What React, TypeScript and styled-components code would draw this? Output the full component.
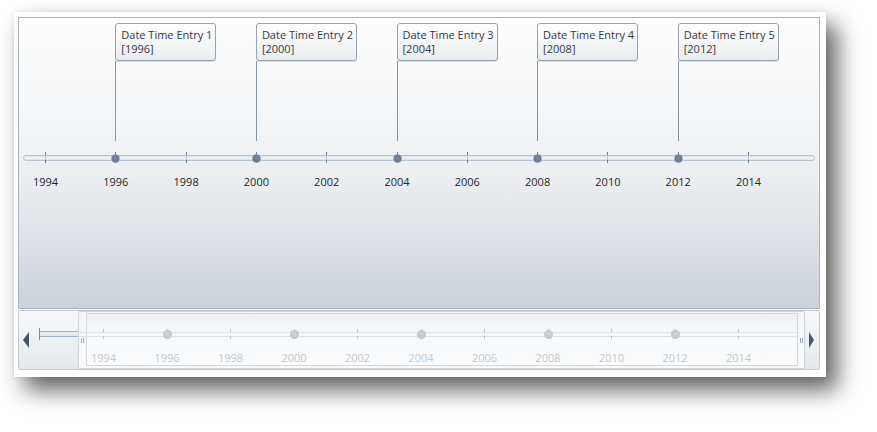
import React from "react";
import styled, { createGlobalStyle } from "styled-components";

const GlobalStyle = createGlobalStyle`
  html, body { margin: 0; padding: 0; background: #ffffff; }
  body { font-family: "Open Sans", "Liberation Sans", sans-serif; }
`;

const YEARS = [1994, 1996, 1998, 2000, 2002, 2004, 2006, 2008, 2010, 2012, 2014];
const ENTRIES = [
  { n: 1, year: 1996 },
  { n: 2, year: 2000 },
  { n: 3, year: 2004 },
  { n: 4, year: 2008 },
  { n: 5, year: 2012 },
];

const mainX = (y: number) => 26 + (y - 1994) * 35.15;
const navX = (y: number) => 16 + (y - 1994) * 31.75;

const Page = styled.div`
  padding: 12px 0 0 14px;
  height: 432px;
  box-sizing: border-box;
`;

const Frame = styled.div`
  width: 812px;
  height: 365px;
  box-sizing: border-box;
  padding: 5px 6px 7px 4px;
  background: #ffffff;
  box-shadow: 11px 13px 22px rgba(0, 0, 0, 0.62), 0 0 6px rgba(0, 0, 0, 0.08);
  display: flex;
  flex-direction: column;
  gap: 1px;
`;

const MainPanel = styled.div`
  height: 292px;
  flex-shrink: 0;
  box-sizing: border-box;
  border: 1px solid #a9b3bd;
  padding-top: 5px;
  background: linear-gradient(180deg, #fdfdfd 0%, #f6f7f8 30%, #eceef1 55%, #dde1e6 78%, #ccd2d9 100%);
  display: flex;
  flex-direction: column;
`;

const CalloutRow = styled.div`
  position: relative;
  height: 118px;
`;

const Callout = styled.div`
  position: absolute;
  top: 0;
  display: flex;
  flex-direction: column;
`;

const CalloutBox = styled.div`
  width: 101px;
  box-sizing: border-box;
  border: 1px solid #97a3b0;
  border-radius: 3px;
  padding: 4px 5px;
  background: linear-gradient(180deg, #ffffff 0%, #f3f4f6 60%, #e9ecef 100%);
  box-shadow: 0 1px 1px rgba(0, 0, 0, 0.12);
  font-size: 11px;
  line-height: 14px;
  color: #333a42;
  white-space: nowrap;
`;

const Stem = styled.div`
  width: 1px;
  height: 80px;
  background: #8794a2;
`;

const AxisRow = styled.div`
  position: relative;
  height: 12px;
  margin-top: 11px;
`;

const Track = styled.div`
  position: absolute;
  left: 4px;
  right: 4px;
  top: 3px;
  height: 6px;
  box-sizing: border-box;
  border: 1px solid #b7c3cf;
  border-radius: 3px;
  background: linear-gradient(180deg, #d9e1ea 0%, #f1f4f7 50%, #d9e1ea 100%);
`;

const Tick = styled.div`
  position: absolute;
  top: 0;
  width: 1px;
  height: 11px;
  background: linear-gradient(180deg, #6f7d8c 0 3px, #b7c1cc 3px 8px, #6f7d8c 8px);
`;

const Dot = styled.div`
  position: absolute;
  top: 1.5px;
  width: 9px;
  height: 9px;
  margin-left: -4.5px;
  border-radius: 50%;
  box-sizing: border-box;
  border: 1px solid #8c9bab;
  background: radial-gradient(circle at 50% 45%, #7d8fa2 0%, #5f7184 70%);
`;

const LabelRow = styled.div`
  position: relative;
  height: 16px;
  margin-top: 10px;
`;

const YearLabel = styled.span<{ $faint?: boolean }>`
  position: absolute;
  top: 0;
  transform: translateX(-50%);
  font-size: 11px;
  line-height: ${(p) => (p.$faint ? "14px" : "16px")};
  color: ${(p) => (p.$faint ? "#c2c7cd" : "#22272c")};
`;

const NavPanel = styled.div`
  height: 60px;
  flex-shrink: 0;
  display: flex;
  box-sizing: border-box;
  border: 1px solid #c3cad2;
  border-radius: 2px;
  background: linear-gradient(180deg, #f6f7f9 0%, #eef1f4 50%, #e4e8ec 100%);
`;

const LeftZone = styled.div`
  width: 59px;
  display: flex;
  align-items: center;
`;

const ArrowButton = styled.div<{ $dir: "left" | "right" }>`
  width: 0;
  height: 0;
  border-top: 8px solid transparent;
  border-bottom: 8px solid transparent;
  ${(p) =>
    p.$dir === "left"
      ? "border-right: 6px solid #46566a; margin: 0 10px 0 4px;"
      : "border-left: 5px solid #46566a; margin: 0 0 0 4px;"}
`;

const OffTrack = styled.div`
  flex: 1;
  height: 6px;
  margin-top: -13px;
  box-sizing: border-box;
  border-top: 1px solid #9fb0c2;
  border-bottom: 1px solid #9fb0c2;
  background: #e3e9ef;
  position: relative;
  &::before {
    content: "";
    position: absolute;
    left: 0;
    top: -4px;
    width: 1px;
    height: 12px;
    background: #7b8c9e;
  }
`;

const Window = styled.div`
  width: 727px;
  box-sizing: border-box;
  display: flex;
  border: 1px solid #cdd3d9;
  border-radius: 2px;
  background: linear-gradient(180deg, #f3f5f7 0%, #fbfbfc 100%);
  padding: 1px 0 2px;
`;

const Grip = styled.div<{ $w: number }>`
  width: ${(p) => p.$w}px;
  display: flex;
  align-items: center;
  justify-content: center;
  &::before {
    content: "";
    width: 3px;
    height: 5px;
    margin-top: 2px;
    border-left: 1px solid #a3abb3;
    border-right: 1px solid #a3abb3;
    box-sizing: border-box;
  }
`;

const NavInner = styled.div`
  flex: 1;
  position: relative;
  box-sizing: border-box;
  border: 1px solid #d2d8de;
  background: linear-gradient(180deg, #eef1f4 0%, #f6f8fa 40%, #fbfcfd 100%);
  display: flex;
  flex-direction: column;
`;

const NavAxis = styled.div`
  position: relative;
  height: 10px;
  margin-top: 15px;
`;

const NavTrack = styled.div`
  position: absolute;
  left: -9px;
  right: 0;
  top: 3px;
  height: 5px;
  box-sizing: border-box;
  border-top: 1px solid #dbe1e7;
  border-bottom: 1px solid #dbe1e7;
`;

const NavTick = styled.div`
  position: absolute;
  top: 0;
  width: 1px;
  height: 10px;
  background: linear-gradient(180deg, #b9c1c9 0 3px, transparent 3px 7px, #b9c1c9 7px);
`;

const NavDot = styled.div`
  position: absolute;
  top: 1px;
  width: 9px;
  height: 9px;
  margin-left: -4.5px;
  border-radius: 50%;
  background: radial-gradient(circle at 50% 45%, #cdd3d9 0%, #bcc4cc 80%);
`;

const NavLabels = styled.div`
  position: relative;
  height: 14px;
  margin-top: 12px;
`;

const RightZone = styled.div`
  flex: 1;
  display: flex;
  align-items: center;
`;

export default function App() {
  return (
    <>
      <GlobalStyle />
      <Page>
        <Frame>
          <MainPanel>
            <CalloutRow>
              {ENTRIES.map((e) => (
                <Callout key={e.n} style={{ left: mainX(e.year) }}>
                  <CalloutBox>
                    Date Time Entry {e.n}
                    <br />[{e.year}]
                  </CalloutBox>
                  <Stem />
                </Callout>
              ))}
            </CalloutRow>
            <AxisRow>
              <Track />
              {YEARS.map((y) => (
                <Tick key={y} style={{ left: mainX(y) }} />
              ))}
              {ENTRIES.map((e) => (
                <Dot key={e.n} style={{ left: mainX(e.year) + 0.5 }} />
              ))}
            </AxisRow>
            <LabelRow>
              {YEARS.map((y) => (
                <YearLabel key={y} style={{ left: mainX(y) + 0.5 }}>
                  {y}
                </YearLabel>
              ))}
            </LabelRow>
          </MainPanel>
          <NavPanel>
            <LeftZone>
              <ArrowButton $dir="left" />
              <OffTrack />
            </LeftZone>
            <Window>
              <Grip $w={7} />
              <NavInner>
                <NavAxis>
                  <NavTrack />
                  {YEARS.map((y) => (
                    <NavTick key={y} style={{ left: navX(y) }} />
                  ))}
                  {ENTRIES.map((e) => (
                    <NavDot key={e.n} style={{ left: navX(e.year) + 0.5 }} />
                  ))}
                </NavAxis>
                <NavLabels>
                  {YEARS.map((y) => (
                    <YearLabel key={y} $faint style={{ left: navX(y) + 0.5 }}>
                      {y}
                    </YearLabel>
                  ))}
                </NavLabels>
              </NavInner>
              <Grip $w={6} />
            </Window>
            <RightZone>
              <ArrowButton $dir="right" />
            </RightZone>
          </NavPanel>
        </Frame>
      </Page>
    </>
  );
}
